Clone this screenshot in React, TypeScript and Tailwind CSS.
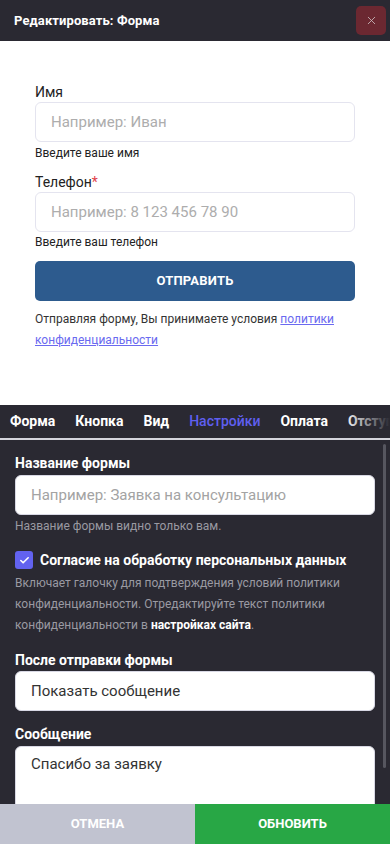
import { X, Check } from 'lucide-react';

const font = { fontFamily: 'Roboto, "Noto Sans", sans-serif' };

export default function App() {
  const tabs = ['Форма', 'Кнопка', 'Вид', 'Настройки', 'Оплата', 'Отступы'];

  return (
    <div style={font} className="w-[390px] h-[844px] flex flex-col overflow-hidden bg-white">
      {/* HEADER */}
      <div className="h-[41px] shrink-0 bg-[#2a2932] flex items-center justify-between pl-[14px] pr-[4px]">
        <span className="text-[13px] font-bold text-white tracking-[0.1px]">Редактировать: Форма</span>
        <button className="w-[30px] h-[29px] rounded-[5px] bg-[#6b2831] flex items-center justify-center">
          <X className="w-[13px] h-[13px] text-[#c9b7bb]" strokeWidth={1.6} />
        </button>
      </div>

      {/* PREVIEW */}
      <div className="h-[364px] shrink-0 bg-white px-[35px] pt-[41px]">
        <div className="text-[14px] leading-5 text-[#222]">Имя</div>
        <div className="h-10 rounded-[6px] border border-[#e4e4ef] flex items-center px-[15px] text-[15px] text-[#adadad]">
          Например: Иван
        </div>
        <div className="text-[12px] leading-[18px] text-[#222] mt-[2px]">Введите ваше имя</div>

        <div className="text-[14px] leading-5 text-[#222] mt-[10px]">
          Телефон<span className="text-[#e0404a]">*</span>
        </div>
        <div className="h-10 rounded-[6px] border border-[#e4e4ef] flex items-center px-[15px] text-[15px] text-[#adadad]">
          Например: 8 123 456 78 90
        </div>
        <div className="text-[12px] leading-[18px] text-[#222] mt-[1px]">Введите ваш телефон</div>

        <button className="mt-[10px] w-full h-10 rounded-[5px] bg-[#2d5b8e] text-white text-[13px] font-bold tracking-[0.2px]">
          ОТПРАВИТЬ
        </button>
        <p className="mt-[8px] text-[12px] leading-[21px] text-[#333]">
          Отправляя форму, Вы принимаете условия{' '}
          <a className="text-[#6a6af0] underline">политики конфиденциальности</a>
        </p>
      </div>

      {/* SETTINGS PANEL */}
      <div className="flex-1 min-h-0 bg-[#2a2932] flex flex-col relative">
        <div className="relative shrink-0 h-[35px] border-b-2 border-[#d4d4dc] flex whitespace-nowrap overflow-hidden">
          {tabs.map((t) => (
            <div
              key={t}
              className={`px-[10px] flex items-center text-[14px] font-bold -mb-[2px] border-b-2 ${
                t === 'Настройки' ? 'text-[#5f5ff0] border-[#5f5ff0] font-medium' : 'text-white border-transparent'
              }`}
            >
              {t}
            </div>
          ))}
          <div className="absolute right-0 top-0 -bottom-[2px] w-[46px] bg-gradient-to-l from-[#2a2932] to-transparent" />
        </div>

        <div className="flex-1 min-h-0 overflow-hidden px-[15px] pt-[13px]">
          <div className="text-[14px] leading-5 font-bold text-white">Название формы</div>
          <div className="mt-[2px] h-10 rounded-[6px] bg-white border border-[#d8d8e4] flex items-center px-[15px] text-[15px] text-[#a3a3a3]">
            Например: Заявка на консультацию
          </div>
          <div className="text-[12px] leading-[18px] text-[#9a9aa2] mt-[2px]">Название формы видно только вам.</div>

          <div className="mt-[16px] flex items-center gap-[7px] h-[18px]">
            <div className="w-[18px] h-[18px] rounded-[3px] bg-[#6262f0] flex items-center justify-center">
              <Check className="w-[11px] h-[11px] text-white" strokeWidth={3.5} />
            </div>
            <span className="text-[14px] font-bold text-white">Согласие на обработку персональных данных</span>
          </div>
          <p className="mt-[4px] text-[12px] leading-[21px] text-[#9a9aa2]">
            Включает галочку для подтверждения условий политики конфиденциальности. Отредактируйте текст политики
            конфиденциальности в <span className="font-bold text-white">настройках сайта</span>.
          </p>

          <div className="mt-[14px] text-[14px] leading-5 font-bold text-white">После отправки формы</div>
          <div className="mt-[1px] h-10 rounded-[6px] bg-white border border-[#d8d8e4] flex items-center px-[15px] text-[15px] text-[#333]">
            Показать сообщение
          </div>

          <div className="mt-[13px] text-[14px] leading-5 font-bold text-white">Сообщение</div>
          <div className="mt-[2px] h-[90px] rounded-[6px] bg-white border border-[#d8d8e4] px-[15px] pt-[7px] text-[15px] leading-5 text-[#333]">
            Спасибо за заявку
          </div>
        </div>

        {/* scrollbar */}
        <div className="absolute right-[4px] top-[39px] w-[3px] h-[324px] rounded-full bg-[#56565f]" />
      </div>

      {/* FOOTER */}
      <div className="h-10 shrink-0 flex">
        <button className="w-[195px] bg-[#c1c3d0] text-white text-[13px] font-bold">ОТМЕНА</button>
        <button className="flex-1 bg-[#28a745] text-white text-[13px] font-bold">ОБНОВИТЬ</button>
      </div>
    </div>
  );
}
